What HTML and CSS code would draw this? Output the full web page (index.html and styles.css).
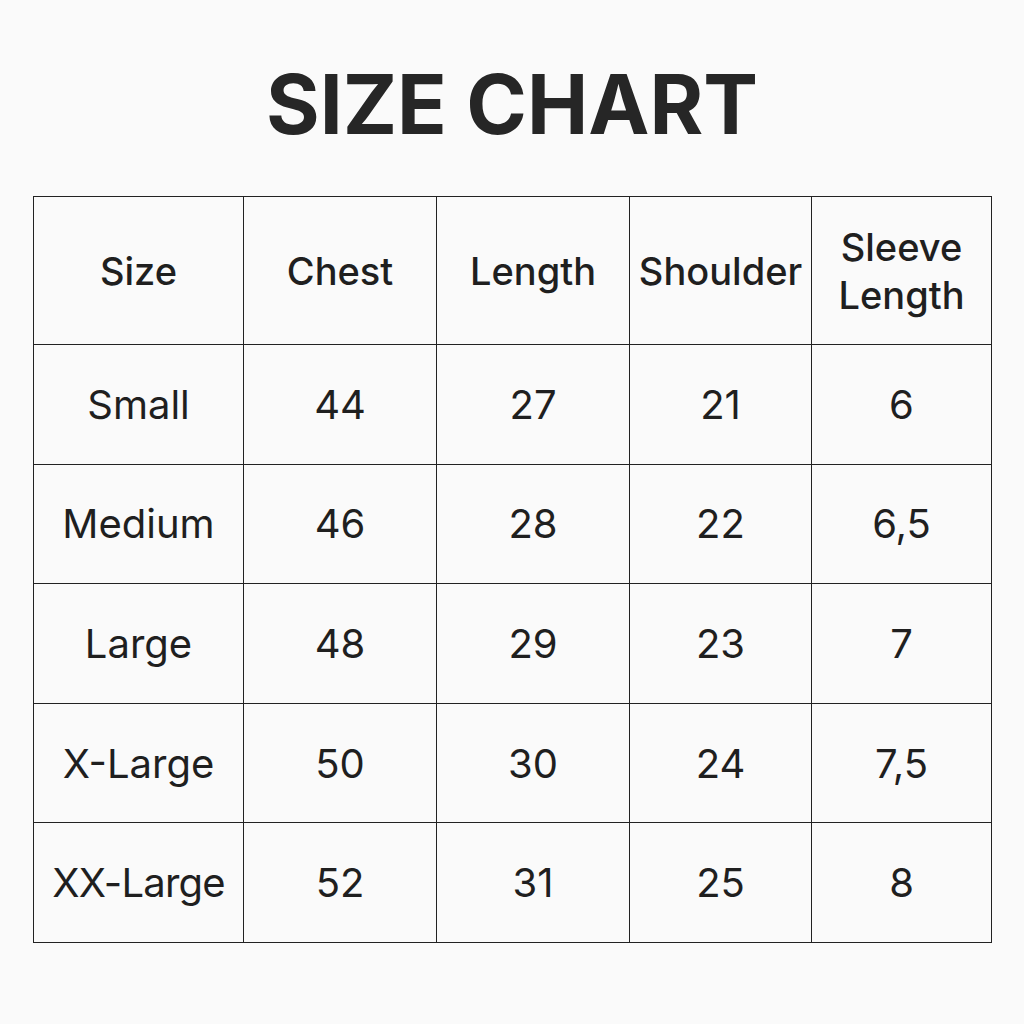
FILE: index.html
```html
<!DOCTYPE html>
<html>
<head>
<meta charset="utf-8">
<link rel="stylesheet" href="styles.css">
</head>
<body>
<main class="page">
  <h1 class="title">SIZE CHART</h1>
  <table class="chart">
    <colgroup>
      <col class="c1"><col class="c2"><col class="c3"><col class="c4"><col class="c5">
    </colgroup>
    <thead>
      <tr><th>Size</th><th>Chest</th><th>Length</th><th>Shoulder</th><th>Sleeve<br>Length</th></tr>
    </thead>
    <tbody>
      <tr><td>Small</td><td>44</td><td>27</td><td>21</td><td>6</td></tr>
      <tr><td>Medium</td><td>46</td><td>28</td><td>22</td><td>6,5</td></tr>
      <tr><td>Large</td><td>48</td><td>29</td><td>23</td><td>7</td></tr>
      <tr><td>X-Large</td><td>50</td><td>30</td><td>24</td><td>7,5</td></tr>
      <tr><td>XX-Large</td><td>52</td><td>31</td><td>25</td><td>8</td></tr>
    </tbody>
  </table>
</main>
</body>
</html>
```
FILE: styles.css
```css
html, body {
  margin: 0;
  padding: 0;
  background: #fafafa;
}
body {
  font-family: Inter, "Noto Sans", sans-serif;
  color: #1f1f1f;
}
.page {
  width: 1024px;
  height: 1024px;
  display: flex;
  flex-direction: column;
  align-items: center;
}
.title {
  margin: 64px 0 0 0;
  font-size: 82px;
  line-height: 1;
  font-weight: 700;
  color: #262626;
  letter-spacing: 0;
}
.chart {
  margin: 50px 0 0 0;
  border-collapse: collapse;
  table-layout: fixed;
  width: 959px;
  margin-left: 1px;
}
.c1 { width: 210px; }
.c2 { width: 193px; }
.c3 { width: 193px; }
.c4 { width: 182px; }
.c5 { width: 180px; }
.chart th, .chart td {
  border: 1px solid #222;
  text-align: center;
  padding: 0;
}
.chart th {
  height: 147px;
  font-size: 38px;
  font-weight: 500;
  line-height: 48px;
}
.chart td {
  height: 118.6px;
  font-size: 40px;
  font-weight: 400;
}
.chart tbody tr:last-child td:first-child {
  letter-spacing: -0.8px;
}
```
